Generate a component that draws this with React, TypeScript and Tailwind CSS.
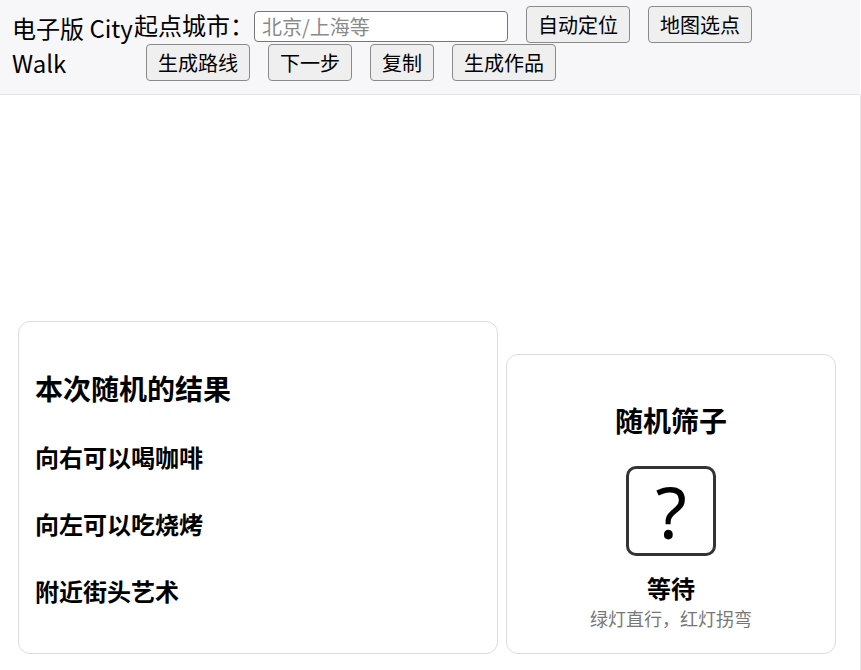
import React from "react";

const font = "font-['Noto_Sans_CJK_SC','Noto_Sans',sans-serif]";

const actionsTop = ["自动定位", "地图选点"];
const actionsBottom = ["生成路线", "下一步", "复制", "生成作品"];

const results = ["向右可以喝咖啡", "向左可以吃烧烤", "附近街头艺术"];

function Btn({ label }: { label: string }) {
  return (
    <button className="ml-3 h-[37px] rounded-[4px] border border-[#8a8a8a] bg-[#efefef] px-[11px] text-[20px] leading-[29px] text-black">
      {label}
    </button>
  );
}

export default function App() {
  return (
    <div className={`${font} w-[861px] h-[670px] bg-white text-black`}>
      {/* header */}
      <header className="flex w-[860px] items-start border-b border-[#e3e3e6] bg-[#f7f7f9] pl-3 pt-[6px] pb-[13px]">
        <div className="mt-[4px] w-[122px] text-[24px] leading-[35px]">电子版 City Walk</div>
        <div className="flex flex-1 flex-wrap items-center gap-x-[6px]">
          <div className="flex items-center">
            <span className="text-[24px] leading-[35px]">起点城市：</span>
            <input
              type="text"
              placeholder="北京/上海等"
              className="mt-[4px] h-[31px] w-[254px] rounded-[4px] border border-[#767676] bg-white px-[7px] text-[20px] placeholder:text-[#8a8a8a] outline-none"
            />
          </div>
          {actionsTop.map((a) => (
            <Btn key={a} label={a} />
          ))}
          <div className="basis-full h-[1px]" />
          {actionsBottom.map((a) => (
            <Btn key={a} label={a} />
          ))}
        </div>
      </header>

      {/* main */}
      <main className="flex h-[575px] w-[861px] flex-col justify-end border-r border-[#e6e6e6] pb-[16px] pl-[18px]">
        <div className="flex items-end gap-[8px]">
          <section className="w-[480px] rounded-[12px] border border-[#dcdcdc] bg-white px-4 pt-[46px] pb-[45px]">
            <h2 className="mb-[31px] text-[28px] font-bold leading-[40px]">本次随机的结果</h2>
            <div className="flex flex-col gap-[32px]">
              {results.map((r) => (
                <p key={r} className="text-[24px] font-bold leading-[35px]">
                  {r}
                </p>
              ))}
            </div>
          </section>

          <section className="flex w-[330px] flex-col items-center rounded-[12px] border border-[#dcdcdc] bg-white pt-[45px] pb-[22px]">
            <h2 className="text-[28px] font-bold leading-[40px]">随机筛子</h2>
            <div className="mt-[26px] flex h-[90px] w-[90px] items-center justify-center rounded-[10px] border-[3px] border-[#333]">
              <span className="text-[72px] leading-none font-['Noto_Sans',sans-serif]">?</span>
            </div>
            <div className="mt-[14px] text-[24px] font-bold leading-[35px]">等待</div>
            <div className="text-[18px] leading-[26px] text-[#777]">绿灯直行，红灯拐弯</div>
          </section>
        </div>
      </main>
    </div>
  );
}
